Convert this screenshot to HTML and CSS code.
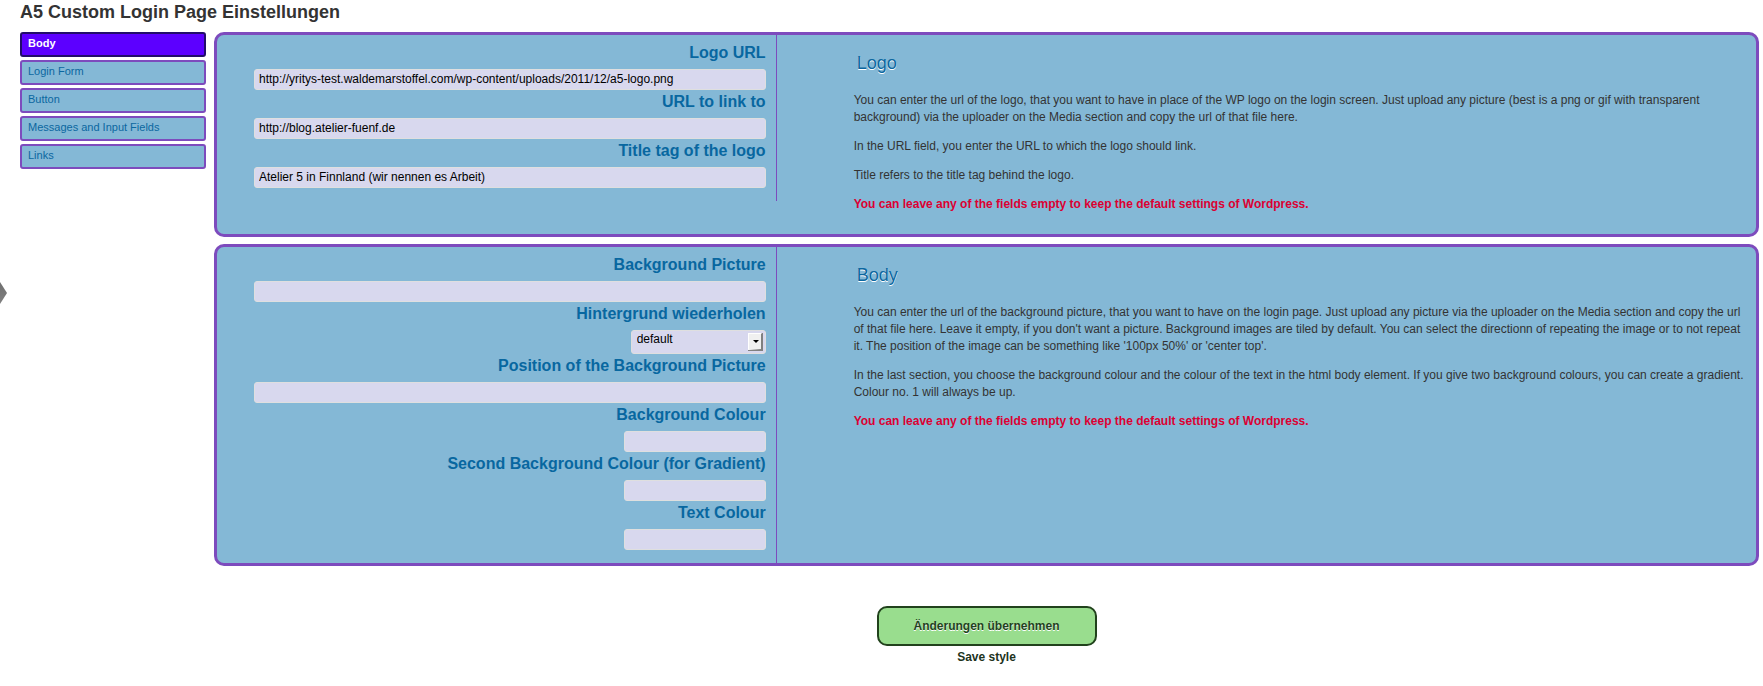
FILE: index.html
```html
<!DOCTYPE html>
<html lang="de">
<head>
<meta charset="utf-8">
<title>A5 Custom Login Page Einstellungen</title>
<link rel="stylesheet" href="styles.css">
</head>
<body>
<svg class="menu-arrow" width="7" height="22" viewBox="0 0 7 22" aria-hidden="true">
  <defs><linearGradient id="shade" x1="0" y1="0" x2="0" y2="1"><stop offset="0" stop-color="#6f6f6f"/><stop offset="1" stop-color="#808080"/></linearGradient></defs>
  <path d="M0 0 7 11 0 22Z" fill="url(#shade)"/>
</svg>
<h1 class="page-title">A5 Custom Login Page Einstellungen</h1>
<div class="layout">
  <nav class="tabs">
    <a class="tab tab-active" href="#body">Body</a>
    <a class="tab" href="#login-form">Login Form</a>
    <a class="tab" href="#button">Button</a>
    <a class="tab" href="#messages">Messages and Input Fields</a>
    <a class="tab" href="#links">Links</a>
  </nav>
  <form class="settings">
    <section class="panel">
      <div class="fields fields-short">
        <label class="label" for="logo">Logo URL</label>
        <input class="field" id="logo" type="text" value="http://yritys-test.waldemarstoffel.com/wp-content/uploads/2011/12/a5-logo.png">
        <label class="label" for="url">URL to link to</label>
        <input class="field" id="url" type="text" value="http://blog.atelier-fuenf.de">
        <label class="label" for="title">Title tag of the logo</label>
        <input class="field" id="title" type="text" value="Atelier 5 in Finnland (wir nennen es Arbeit)">
      </div>
      <div class="help">
        <h2 class="help-title">Logo</h2>
        <p class="text">You can enter the url of the logo, that you want to have in place of the WP logo on the login screen. Just upload any picture (best is a png or gif with transparent background) via the uploader on the Media section and copy the url of that file here.</p>
        <p class="text">In the URL field, you enter the URL to which the logo should link.</p>
        <p class="text">Title refers to the title tag behind the logo.</p>
        <p class="text note">You can leave any of the fields empty to keep the default settings of Wordpress.</p>
      </div>
    </section>
    <section class="panel" id="body">
      <div class="fields">
        <label class="label" for="bg-picture">Background Picture</label>
        <input class="field" id="bg-picture" type="text">
        <label class="label" for="bg-repeat">Hintergrund wiederholen</label>
        <span class="select-wrap">
          <select class="select" id="bg-repeat"><option>default</option></select>
          <svg class="select-arrow" width="15" height="18" viewBox="0 0 15 18" aria-hidden="true">
            <path d="M0 0H15V18H0Z" fill="#808080"/>
            <path d="M0 0H14L13 1V16L0 17Z" fill="#fff"/>
            <path d="M1 1H13V16H1Z" fill="#f0f0f0"/>
            <path d="M5 7H11L8 10Z" fill="#000"/>
          </svg>
        </span>
        <label class="label" for="bg-position">Position of the Background Picture</label>
        <input class="field" id="bg-position" type="text">
        <label class="label" for="bg-colour">Background Colour</label>
        <input class="field field-small" id="bg-colour" type="text">
        <label class="label" for="bg-colour2">Second Background Colour (for Gradient)</label>
        <input class="field field-small" id="bg-colour2" type="text">
        <label class="label" for="text-colour">Text Colour</label>
        <input class="field field-small" id="text-colour" type="text">
      </div>
      <div class="help">
        <h2 class="help-title">Body</h2>
        <p class="text">You can enter the url of the background picture, that you want to have on the login page. Just upload any picture via the uploader on the Media section and copy the url of that file here. Leave it empty, if you don't want a picture. Background images are tiled by default. You can select the directionn of repeating the image or to not repeat it. The position of the image can be something like '100px 50%' or 'center top'.</p>
        <p class="text">In the last section, you choose the background colour and the colour of the text in the html body element. If you give two background colours, you can create a gradient. Colour no. 1 will always be up.</p>
        <p class="text note">You can leave any of the fields empty to keep the default settings of Wordpress.</p>
      </div>
    </section>
    <div class="actions">
      <button class="save" type="submit">Änderungen übernehmen</button>
      <span class="save-hint">Save style</span>
    </div>
  </form>
</div>
</body>
</html>
```
FILE: styles.css
```css
* { box-sizing: border-box; }
body {
  margin: 0;
  padding: 0 4px 0 20px;
  background: #fff;
  color: #333;
  font: 12px/17px "Liberation Sans", Arial, sans-serif;
}
.menu-arrow { position: absolute; left: 0; top: 282px; }
.page-title { margin: 0; padding-bottom: 8px; font-size: 18px; line-height: 24px; }
.layout { display: flex; align-items: flex-start; gap: 8px; }
.tabs { display: flex; flex-direction: column; gap: 3px; width: 186px; }
.tab {
  padding: 1px 6px 3px;
  border: 2px solid #7d4bbd;
  border-radius: 3px;
  background: #84b8d6;
  color: #0b67a0;
  font-size: 11px;
  text-decoration: none;
}
.tab-active { border-color: #220d6b; background: #5c00ff; color: #fff; font-weight: bold; }
.settings { display: flex; flex-direction: column; gap: 7px; flex: 1; }
.panel {
  display: grid;
  grid-template-columns: 4fr 7fr;
  border: 3px solid #7d4bbd;
  border-radius: 10px;
  background: #84b8d6;
}
.fields {
  display: flex;
  flex-direction: column;
  align-items: flex-end;
  padding: 6px 10px 13px 37px;
  border-right: 1px solid #7d4bbd;
}
.fields-short { align-self: start; }
.label { color: #0867a0; font-size: 16px; font-weight: bold; line-height: 24px; padding-bottom: 4px; }
.field, .select {
  width: 100%;
  height: 21px;
  margin: 0;
  padding: 0 4px 2px;
  border: 1px solid #dfdfdf;
  border-radius: 3px;
  background: #d8d8ee;
  color: #000;
  font: inherit;
}
.field-small { width: 142px; }
.select-wrap { position: relative; width: 135px; height: 24px; }
.select { display: block; height: 24px; padding: 0 20px 5px 5px; appearance: none; }
.select-arrow { position: absolute; right: 3px; top: 3px; pointer-events: none; }
.help { padding: 16px 11px 21px 77px; }
.help-title {
  margin: 0 0 17px;
  padding-left: 3px;
  color: #0b67a0;
  font-size: 18px;
  font-weight: normal;
  line-height: 24px;
  text-shadow: 0 1px 0 #fff;
}
.text { margin: 0 0 12px; }
.text:last-child { margin-bottom: 0; }
.note { color: #dc0032; font-weight: bold; }
.actions { display: flex; flex-direction: column; align-items: center; gap: 3px; padding-top: 33px; }
.save {
  width: 220px;
  height: 40px;
  border: 2px solid #21421c;
  border-radius: 10px;
  background: #99dd8e;
  color: #21421c;
  font: inherit;
  font-weight: bold;
  text-shadow: 0 1px 0 #fff;
}
.save-hint { color: #21331c; font-weight: bold; }
```
